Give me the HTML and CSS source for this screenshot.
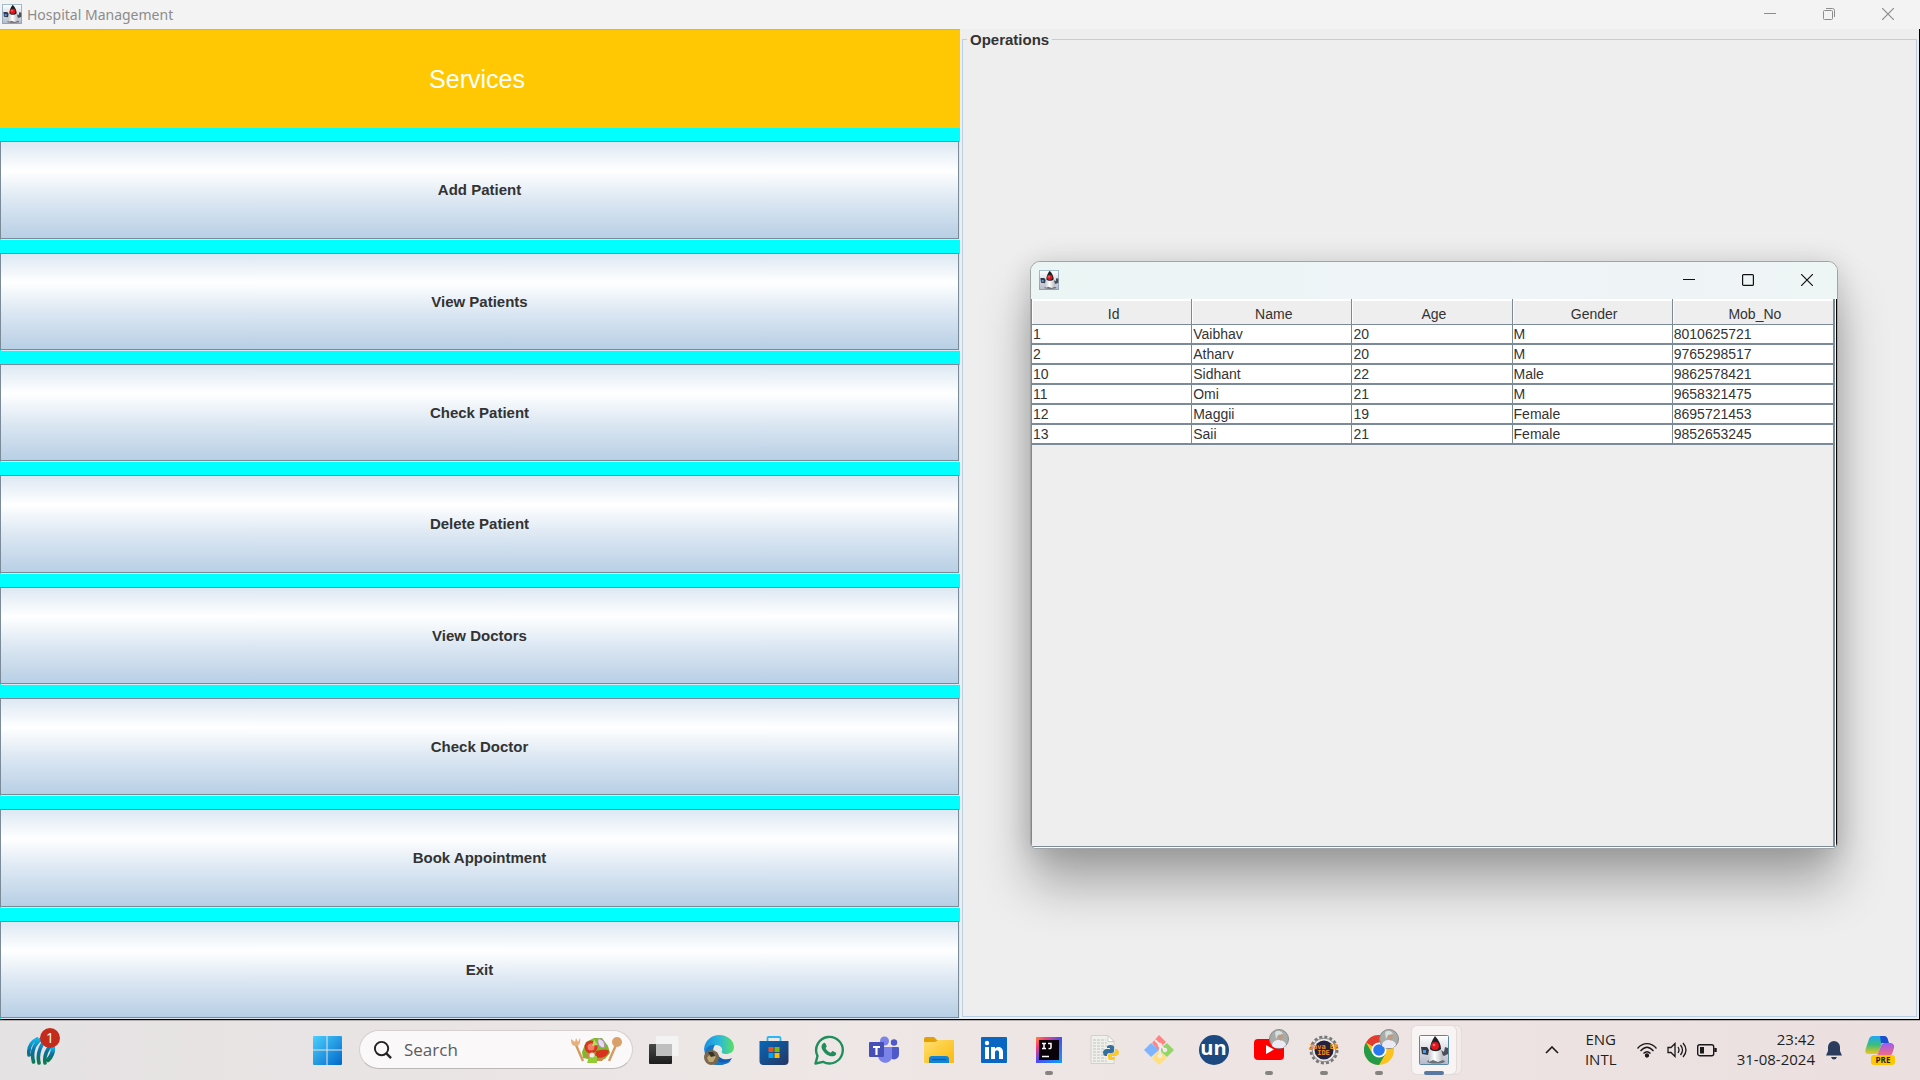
FILE: index.html
```html
<!DOCTYPE html>
<html lang="en">
<head>
<meta charset="utf-8">
<title>Hospital Management</title>
<link rel="stylesheet" href="styles.css">
</head>
<body>
<svg class="defs" aria-hidden="true">
  <defs>
    <linearGradient id="dukebg" x1="0" y1="0" x2="0" y2="1"><stop offset="0" stop-color="#fff"/><stop offset="1" stop-color="#b4bac8"/></linearGradient>
    <linearGradient id="dukebody" x1="0" y1="0" x2="1" y2="0"><stop offset="0" stop-color="#c9ccd0"/><stop offset=".4" stop-color="#fff"/><stop offset="1" stop-color="#b6babf"/></linearGradient>
    <linearGradient id="win" x1="0" y1="0" x2="1" y2="1"><stop offset="0" stop-color="#4cd0ff"/><stop offset="1" stop-color="#0067c8"/></linearGradient>
    <linearGradient id="teal" x1="0" y1="0" x2="0" y2="1"><stop offset="0" stop-color="#12b5ea"/><stop offset=".5" stop-color="#0a6f9f"/><stop offset="1" stop-color="#0b7a52"/></linearGradient>
    <linearGradient id="edge" x1="0" y1="0" x2="1" y2="0"><stop offset="0" stop-color="#1a8fe0"/><stop offset=".5" stop-color="#2bb8dc"/><stop offset="1" stop-color="#5be060"/></linearGradient>
    <linearGradient id="store" x1="0" y1="0" x2="1" y2="1"><stop offset="0" stop-color="#0668b8"/><stop offset="1" stop-color="#253562"/></linearGradient>
    <linearGradient id="folder" x1="0" y1="0" x2="1" y2="1"><stop offset="0" stop-color="#ffdf70"/><stop offset="1" stop-color="#fbb90a"/></linearGradient>
    <linearGradient id="dark" x1="0" y1="0" x2="0" y2="1"><stop offset="0" stop-color="#484848"/><stop offset="1" stop-color="#1c1c1c"/></linearGradient>
    <linearGradient id="ij" x1="0" y1="0" x2="1" y2="1"><stop offset="0" stop-color="#ff8a2c"/><stop offset=".2" stop-color="#fc3c7c"/><stop offset=".5" stop-color="#4a4ef0"/><stop offset="1" stop-color="#08a4f8"/></linearGradient>
    <linearGradient id="cop1" x1="0" y1="0" x2="0" y2="1"><stop offset="0" stop-color="#1fa8f4"/><stop offset=".5" stop-color="#3dbd7c"/><stop offset="1" stop-color="#f6c614"/></linearGradient>
    <linearGradient id="cop2" x1="0" y1="0" x2="0" y2="1"><stop offset="0" stop-color="#9a5cf4"/><stop offset="1" stop-color="#fb6b7c"/></linearGradient>
    <symbol id="duke" viewBox="0 0 30 30">
      <rect x=".5" y=".5" width="29" height="29" rx="1" fill="url(#dukebg)" stroke="#5b86ab"/>
      <ellipse cx="17" cy="26.500" rx="9" ry="2" fill="#6d7078"/>
      <path d="M2 12h6l2 3-1 5-6-1z" fill="#343b46"/><path d="M4 15h3v3H4z" fill="#4d9be0"/>
      <path d="M22 15l3 2 1-5 3 1v6l-4 2-3-2z" fill="#4a4e55"/>
      <path d="M12 12c-1 4-2 8-2 15l4-2 5 2 5-2c0-5-1-9-3-13z" fill="url(#dukebody)"/>
      <path d="M16 1c-3 4-5 9-5 13 3 3 8 3 11 0 0-4-2-9-6-13z" fill="#1e2024"/>
      <circle cx="16" cy="11" r="4" fill="#e3141c"/><circle cx="15" cy="10" r="1.300" fill="#ff6c6c"/>
    </symbol>
    <symbol id="close" viewBox="0 0 12 12"><path d="M0 0 12 12M12 0 0 12" fill="none" stroke="currentColor" stroke-width="1.200"/></symbol>
    <symbol id="min" viewBox="0 0 12 12"><path d="M0 5.500H12" stroke="currentColor"/></symbol>
    <symbol id="face" viewBox="0 0 20 20">
      <circle cx="10" cy="10" r="9.500" fill="#a7aca8" stroke="#898989"/>
      <path d="M3 17c0-5 4-6 7-6s7 2 7 5l-3 3H6z" fill="#e9eaf3"/>
      <path d="M9 4c3-1 5 1 5 4l-2 4-3-3z" fill="#c09a83"/><path d="M6 4c1-3 6-3 8 1l-5 1-2 4z" fill="#d6e0df"/>
    </symbol>
  </defs>
</svg>

<header class="titlebar">
  <svg class="app-icon" aria-hidden="true"><use href="#duke"/></svg>
  <span class="title">Hospital Management</span>
  <div class="win-controls">
    <button aria-label="Minimize"><svg><use href="#min"/></svg></button>
    <button aria-label="Restore"><svg viewBox="0 0 12 12" fill="none" stroke="currentColor"><rect x=".5" y="2.500" width="9" height="9" rx="1"/><path d="M3 .5h6.500a2 2 0 0 1 2 2V9"/></svg></button>
    <button aria-label="Close"><svg><use href="#close"/></svg></button>
  </div>
</header>

<main class="workspace">
  <nav class="services" aria-label="Services">
    <h1>Services</h1>
    <button>Add Patient</button>
    <button>View Patients</button>
    <button>Check Patient</button>
    <button>Delete Patient</button>
    <button>View Doctors</button>
    <button>Check Doctor</button>
    <button>Book Appointment</button>
    <button>Exit</button>
  </nav>
  <section class="panel">
    <fieldset class="operations"><legend>Operations</legend></fieldset>
    <div class="dialog" role="dialog" aria-label="Patients">
      <div class="dialog-bar">
        <svg class="app-icon" aria-hidden="true"><use href="#duke"/></svg>
        <div class="win-controls">
          <button aria-label="Minimize"><svg><use href="#min"/></svg></button>
          <button aria-label="Maximize"><svg viewBox="0 0 12 12"><rect x=".6" y=".6" width="10.800" height="10.800" rx="1" fill="none" stroke="currentColor" stroke-width="1.200"/></svg></button>
          <button aria-label="Close"><svg><use href="#close"/></svg></button>
        </div>
      </div>
      <div class="scroll-pane">
        <table>
          <thead><tr><th>Id</th><th>Name</th><th>Age</th><th>Gender</th><th>Mob_No</th></tr></thead>
          <tbody>
            <tr><td>1</td><td>Vaibhav</td><td>20</td><td>M</td><td>8010625721</td></tr>
            <tr><td>2</td><td>Atharv</td><td>20</td><td>M</td><td>9765298517</td></tr>
            <tr><td>10</td><td>Sidhant</td><td>22</td><td>Male</td><td>9862578421</td></tr>
            <tr><td>11</td><td>Omi</td><td>21</td><td>M</td><td>9658321475</td></tr>
            <tr><td>12</td><td>Maggii</td><td>19</td><td>Female</td><td>8695721453</td></tr>
            <tr><td>13</td><td>Saii</td><td>21</td><td>Female</td><td>9852653245</td></tr>
          </tbody>
        </table>
      </div>
    </div>
  </section>
</main>

<footer class="taskbar">
  <button class="widget" aria-label="Widgets">
    <svg viewBox="0 0 30 30" aria-hidden="true"><g fill="none" stroke="url(#teal)" stroke-width="3.600" stroke-linecap="round"><path d="M3 20C2 13 5 7 11 4M7.500 27C5 17 8 9 15 4M13 28c-2-8 0-15 6-23M19 28c-1-6 1-12 6-18"/><path d="M22 25c3-3 5-7 5-12" stroke-width="4.500"/></g></svg>
    <span class="badge">1</span>
  </button>
  <div class="apps">
    <button class="start" aria-label="Start"><svg viewBox="0 0 30 30"><path d="M1 2q0-1 1-1H14.500V14.500H1zM15.500 1H29q1 0 1 1V14.500H15.500zM1 15.500H14.500V30H2q-1 0-1-1zM15.500 15.500H30V29q0 1-1 1H15.500z" fill="url(#win)"/></svg></button>
    <label class="search">
      <svg class="glass" viewBox="0 0 20 20" aria-hidden="true"><circle cx="9" cy="9" r="7" fill="none" stroke="#222" stroke-width="2"/><path d="m14 14 5 5" stroke="#222" stroke-width="2.500"/></svg>
      <input type="text" placeholder="Search" aria-label="Search">
      <svg class="salad" viewBox="0 0 52 28" aria-hidden="true">
        <path d="m6 9 7 16M46 9 39 25" stroke="#d69a62" stroke-width="2.400"/><path d="M1 3c0 6 2 7 5 7s5-3 4-8L8 6 6 2 5 6z" fill="#e6b07a"/><circle cx="47" cy="6" r="5" fill="#d9a069"/>
        <path d="m12 16 4-10 8-4 8 0 6 8 2 7-5 6-6 1-6 3-5-4-5-1z" fill="#7db928"/>
        <path d="m14 19 9 6h9l6-7-8 1-8-2z" fill="#c88a4c"/>
        <circle cx="21" cy="11" r="6.500" fill="#dd3324"/><circle cx="21" cy="11" r="3.500" fill="#f08066"/><path d="M26 15c5-1 11-2 13 0-1 6-10 9-14 5z" fill="#d8321e"/>
        <path d="M28 3c4-1 8 4 6 9-4 0-7-4-6-9z" fill="#e8daf0" stroke="#b28bc4"/><path d="m17 27 3-9 7 2 0 7z" fill="#93cb35"/><path d="M24 3l4 6-6 1z" fill="#b5dc5c"/><circle cx="22" cy="19" r="2.500" fill="#f1e9ef"/>
      </svg>
    </label>
    <button aria-label="Task view"><svg viewBox="0 0 30 30"><rect x="0" y="9" width="23" height="20" rx="1" fill="url(#dark)"/><rect x="7" y="1" width="22.500" height="20" rx="1" fill="#f3f3f3"/><path d="M7 9H23V21H7z" fill="#bfbfbf"/></svg></button>
    <button aria-label="Edge"><svg viewBox="0 0 30 30">
      <path d="M1 17C0 28 12 33 23 28c2-1 4-3 5-5-6 3-14 1-15-6z" fill="#0f5db4"/>
      <path d="M0 14C1 5 8 0 15 0c9 0 15 6 15 12 0 5-4 7-8 7-3 0-5-1-4-3 1-3-2-6-6-6-6 0-10 4-11 9z" fill="url(#edge)"/>
      <path d="M1 18c0-5 5-9 10-8-3 4-3 12 3 16 4 3 10 1 13 0-5 5-24 8-26-8z" fill="#1577c8"/>
      <circle cx="7.500" cy="22.500" r="7.500" fill="#7b684a"/><path d="M3 23c2-4 6-5 9-1l-3 5H5z" fill="#c1a774"/><path d="M4 17h5l2 4-4 1z" fill="#33342a"/></svg></button>
    <button aria-label="Microsoft Store"><svg viewBox="0 0 30 30"><path d="M8.500 7V3q0-1 1-1H20q1.500 0 1.500 1V7" fill="none" stroke="#2bb7ef" stroke-width="1.800"/><path d="M.5 6h29v20q0 4-4 4h-21q-4 0-4-4z" fill="url(#store)"/><path d="M9.500 12h5v5h-5z" fill="#f25022"/><path d="M15.500 12h5v5h-5z" fill="#7fba00"/><path d="M9.500 18h5v5h-5z" fill="#00a4ef"/><path d="M15.500 18h5v5h-5z" fill="#ffb900"/></svg></button>
    <button aria-label="WhatsApp"><svg viewBox="0 0 30 30"><path d="M1.500 28.500 3.500 21A13.300 13.300 0 1 1 9 26.800z" fill="none" stroke="#1e8e5a" stroke-width="2.400" stroke-linejoin="round"/><path d="M9 8.500c1-1.200 2-1 2.600.2l1 2.300c.4 1-1 1.700-1 2.300 1 2.200 3 3.700 5 4.500.8-.2 1.400-1.700 2-1.800l3 1.400c1 .5.600 1.600 0 2.500-1.200 1.700-4 1.800-6.500.8-3-1.200-5.500-3.500-7-6.500-1-2-.8-4.200.9-5.700z" fill="#1e8e5a"/></svg></button>
    <button aria-label="Teams"><svg viewBox="0 0 30 30"><circle cx="15.500" cy="6" r="4.500" fill="#7b83eb"/><circle cx="25" cy="7.500" r="3.200" fill="#5059c9"/><path d="M20 12h9q1 0 1 1v6c0 5-5 7-9 4z" fill="#5059c9"/><path d="M10 12h13v9c0 9-13 9-14 0z" fill="#7b83eb"/><rect x="0" y="7" width="15" height="15" rx="1" fill="#464eb8"/><path d="M4 11h7v2H8.600v7H6.400v-7H4z" fill="#fff"/></svg></button>
    <button aria-label="File Explorer"><svg viewBox="0 0 30 30"><path d="M0 4q0-2 2-2h8l3 3h15q2 0 2 2v4H0z" fill="#e2a008"/><path d="M0 7h11l3-2h16v22q0 1-1 1H1q-1 0-1-1z" fill="url(#folder)"/><path d="M5 28v-4q0-3 3-3h14q3 0 3 3v4z" fill="#1383d8"/><path d="M8 24.500h14" stroke="#0b5599" stroke-width="1.200"/></svg></button>
    <button aria-label="LinkedIn"><svg viewBox="0 0 30 30"><rect x="2" y="2" width="26" height="26" rx="1" fill="#0a66c2"/><circle cx="8" cy="8" r="2.200" fill="#fff"/><path d="M6 12h4v12H6zM12 12h4v1.700c2-3 8-2.500 8 3.300v7h-4v-6.500c0-3-4-3-4 0V24h-4z" fill="#fff"/></svg></button>
    <button class="running" aria-label="IntelliJ IDEA"><svg viewBox="0 0 30 30"><rect x="2" y="2" width="26" height="26" fill="url(#ij)"/><path d="M5 5h20v20H5z" fill="#0a0208"/><path d="M8 8.500h4M10 8.500v5M8 13.500h4M14 8.500h3v4q0 1.500-2.500 1" fill="none" stroke="#fff" stroke-width="1.500"/><path d="M8 21.500h7" stroke="#fff" stroke-width="1.500"/></svg></button>
    <button aria-label="Python file"><svg viewBox="0 0 30 30"><path d="M2 .5h17l6 6v22H2z" fill="#efefec" stroke="#d0d0cc"/><path d="M19 .5v6h6z" fill="#fff" stroke="#ccc"/><path d="M4 5h13M4 8h14M4 11h14M4 14h11M4 17h10M4 20h11M4 23h13M4 26h14" stroke="#c2c4c2" stroke-dasharray="3 1"/><path d="M18 12q0-2 3.500-2t3.500 2v4q0 2-2 2h-3q-2 0-2 3h-2q-2-1-2-3.500t3-3.500h4v-1h-3z" fill="#33709f"/><path d="M26 14h2q2 1 2 3.500T27 21h-4v1h3v1q0 2-3.500 2T19 23v-3q0-2 2-2h3q2 0 2-2z" fill="#fbc92e"/></svg></button>
    <button aria-label="Git"><svg viewBox="0 0 30 30"><path d="m15 0 7 7-8 8-6-7z" fill="#ff8585"/><path d="m23 8 7 7-7 7-8-7z" fill="#94d666"/><path d="m15 15 8 8-8 7-7-7z" fill="#ffe080"/><path d="m7 8 8 7-8 7-7-7z" fill="#80b4ff"/><path d="m11 5 10 10M16 10v12" stroke="#f0ebea" stroke-width="2"/><circle cx="16" cy="10" r="2.300" fill="#f0ebea"/><circle cx="21" cy="15" r="2.300" fill="#f0ebea"/><circle cx="16" cy="21" r="2.300" fill="#f0ebea"/></svg></button>
    <button aria-label="Unstop"><span class="unstop">un</span></button>
    <button class="running" aria-label="YouTube"><svg viewBox="0 0 30 30"><rect x="0" y="4" width="30" height="21" rx="4" fill="#f00"/><path d="m12 10 8 4.500-8 4.500z" fill="#fff"/></svg><svg class="face"><use href="#face"/></svg></button>
    <button class="running" aria-label="Eclipse Java EE IDE"><svg viewBox="0 0 30 30"><circle cx="15" cy="15" r="13" fill="none" stroke="#777" stroke-width="3" stroke-dasharray="3 2.100"/><circle cx="15" cy="15" r="11.800" fill="#eceae9" stroke="#888"/><circle cx="15" cy="15" r="9.500" fill="#26203e"/></svg><span class="eclipse">Java EE<br>IDE</span></button>
    <button class="running" aria-label="Chrome"><svg viewBox="0 0 30 30"><circle cx="15" cy="15" r="15" fill="#fcc31e"/><path d="M15 15 2 7.500A15 15 0 0 1 28 7.500H15z" fill="#e33b2e"/><path d="M2 7.500A15 15 0 0 0 15 30l6.500-11.200L15 15 8.500 18.700z" fill="#249a4a"/><circle cx="15" cy="15" r="7.500" fill="#fff"/><circle cx="15" cy="15" r="5.800" fill="#2878ee"/></svg><svg class="face"><use href="#face"/></svg></button>
    <button class="running active" aria-label="Hospital Management"><svg><use href="#duke"/></svg></button>
  </div>
  <div class="tray">
    <button aria-label="Show hidden icons"><svg class="chevron" viewBox="0 0 14 8"><path d="m1 7 6-6 6 6" fill="none" stroke="#1a1a1a" stroke-width="1.600"/></svg></button>
    <button class="lang">ENG<br>INTL</button>
    <button class="status" aria-label="Network, volume and battery">
      <svg viewBox="0 0 20 16" fill="none" stroke="#1a1a1a" stroke-width="1.300"><path d="M.5 6.500C6 0 14 0 19.500 6.500M3.500 9C8 4 12 4 16.500 9M6.500 11.500c2.500-2.500 4.500-2.500 7 0"/><circle cx="10" cy="13.500" r="1.500" fill="#1a1a1a"/></svg>
      <svg viewBox="0 0 20 16" fill="none" stroke="#1a1a1a" stroke-width="1.300"><path d="M1 5.500h3L8 1.500v13L4 10.500H1zM11 5q2 3 0 6M13.500 3q4 5 0 10M16 1q6 7 0 14"/></svg>
      <svg viewBox="0 0 20 16" fill="none" stroke="#1a1a1a" stroke-width="1.400"><rect x=".7" y="2.700" width="16" height="11" rx="2"/><path d="M3 5h4v6.500H3z" fill="#1a1a1a" stroke="none"/><path d="M18.500 6v4" stroke-width="2.500"/></svg>
    </button>
    <button class="clock">23:42<br>31-08-2024</button>
    <button aria-label="Notifications"><svg class="bell" viewBox="0 0 16 20"><path d="M0 15.500 2 11V7a6 6 0 0 1 12 0v4l2 4.500zM5 17h6q-1 2.500-3 2.500T5 17z" fill="#2c3c5c"/></svg></button>
    <button class="copilot" aria-label="Copilot"><svg viewBox="0 0 30 30"><path d="M8 1h11q3 0 4 4l-2 3h-4l-4 11H3Q-1 19 1 13L4 4q1-3 4-3z" fill="url(#cop1)"/><path d="M15 1h4q3 0 4 4l1 3h-8z" fill="#1a4fd0"/><path d="M19 8h7q4 1 3 5l-2 6q-1 2-4 2H12l4-10q1-3 3-3z" fill="url(#cop2)"/></svg><span>PRE</span></button>
  </div>
</footer>
</body>
</html>
```
FILE: styles.css
```css
* { box-sizing: border-box; }

body {
  margin: 0;
  min-height: 100vh;
  display: flex;
  flex-direction: column;
  background: #eee;
  font-family: "Liberation Sans", Arial, sans-serif;
  font-size: 15px;
  color: #333;
}

button {
  margin: 0;
  padding: 0;
  border: 0;
  background: none;
  font: inherit;
  color: inherit;
}

.defs { position: absolute; width: 0; height: 0; }
.app-icon { width: 20px; height: 20px; flex: none; }

/* Main window title bar */
.titlebar {
  height: 29px;
  padding: 0 3px 1px 2px;
  display: flex;
  align-items: center;
  gap: 5px;
  background: #f3f3f3;
  color: #8c8c8c;
}

.title {
  font-family: "Noto Sans", "Open Sans", sans-serif;
  font-size: 14px;
}

.win-controls { margin-left: auto; display: flex; align-self: stretch; }
.win-controls button {
  width: 59px;
  display: flex;
  align-items: center;
  justify-content: center;
}
.win-controls svg { width: 12px; height: 12px; }

/* Two equal halves */
.workspace {
  flex: 1;
  display: grid;
  grid-template-columns: 1fr 1fr;
  border-bottom: 1px solid #000;
}

.services {
  display: grid;
  grid-auto-rows: 1fr;
  gap: 13px;
  padding-top: 1px;
  background: #0ff;
}

.services h1 {
  margin: 0;
  padding-right: 6px;
  display: flex;
  align-items: center;
  justify-content: center;
  background: #ffc803;
  color: #fff;
  font-size: 25px;
  font-weight: 400;
}

.services button {
  border: 1px solid #7a8a99;
  margin: 0 1px 1px 0;
  box-shadow: 1px 1px 0 #d9e8f3;
  background: linear-gradient(#dde8f3 0%, #fff 30%, #dde8f3 60%, #b8cfe5 100%);
  font-weight: 700;
}

.panel {
  position: relative;
  display: flex;
  padding: 2px 2px;
  border-right: 1px solid #000;
}

.operations {
  flex: 1;
  margin: 0;
  padding: 0 8px;
  border: 1px solid #b8cfe5;
}
.operations legend {
  padding: 0 3px;
  margin-left: -4px;
  font-weight: 700;
  line-height: 17px;
}

/* Floating patient list window */
.dialog {
  position: absolute;
  left: 70px;
  top: 232px;
  width: 808px;
  height: 588px;
  display: flex;
  flex-direction: column;
  border: 1px solid #a0a4a6;
  border-radius: 10px 10px 6px 6px;
  overflow: hidden;
  background: #eee;
  box-shadow: 0 36px 50px rgba(0, 0, 0, .3), 0 2px 28px rgba(0, 0, 0, .14);
}

.dialog-bar {
  height: 37px;
  flex: none;
  padding: 0 1px 2px 8px;
  display: flex;
  align-items: center;
  background: linear-gradient(90deg, #ebf5f4, #eff4f8 50%, #eef5f5);
  color: #111;
}

.scroll-pane {
  flex: 1;
  border: solid #7a8a99;
  border-width: 0 2px 1px 1px;
  box-shadow: 0 1px 0 #fff, 1px 0 0 #fff, 2px 0 0 #000;
  margin: 0 2px 1px 0;
}

table {
  width: 100%;
  table-layout: fixed;
  border-collapse: separate;
  border-spacing: 0;
  font-size: 14px;
}

th {
  height: 26px;
  padding: 4px 0 0 4px;
  font-weight: 400;
  background: #eee;
  border-right: 1px solid #7a8a99;
  border-bottom: 1px solid #7a8a99;
  box-shadow: inset 1px 2px 0 #fff;
}

td {
  height: 20px;
  padding: 1px 0 0 1px;
  background: #fff;
  border-right: 1px solid #7a8a99;
  border-bottom: 2px solid #7a8a99;
  line-height: 17px;
}

th:last-child, td:last-child { border-right: 0; }

/* Taskbar */
.taskbar {
  height: 60px;
  display: flex;
  align-items: center;
  padding: 0 25px 2px 26px;
  border-top: 1px solid #b5b0af;
  background: linear-gradient(90deg, #e5e2e3, #eee7e6 45%, #ebe0df);
  font-family: "Open Sans", "Noto Sans", sans-serif;
  color: #1f1f1f;
}

.taskbar svg { display: block; }

.widget { position: relative; width: 30px; height: 30px; }
.widget svg { width: 30px; height: 30px; }
.badge {
  position: absolute;
  left: 14px;
  top: -7px;
  width: 20px;
  height: 20px;
  border-radius: 50%;
  background: #c42b1c;
  color: #fff;
  font-size: 14px;
  line-height: 20px;
}

.apps { margin-left: 243px; display: flex; align-items: center; }
.apps button {
  position: relative;
  width: 55px;
  height: 50px;
  display: flex;
  align-items: center;
  justify-content: center;
}
.apps button svg { width: 30px; height: 30px; }
.apps .face {
  position: absolute;
  left: 28px;
  top: 4px;
  width: 20px;
  height: 20px;
}

.running::after {
  content: "";
  position: absolute;
  left: 50%;
  bottom: 0;
  width: 8px;
  height: 4px;
  margin-left: -4px;
  border-radius: 2px;
  background: #858382;
}
.apps .active {
  width: 44px;
  height: 48px;
  margin-left: 6px;
  border-radius: 5px;
  background: #f8f4f3;
  box-shadow: 0 0 0 1px #e2dcdb, 5px 0 0 #f1eceb, 5px 0 0 1px #e2dcdb;
}
.active::after { width: 20px; margin-left: -10px; background: #5878a2; bottom: -1px; }

.search {
  width: 274px;
  height: 39px;
  margin: 0 3px 0 5px;
  padding: 0 10px 0 13px;
  display: flex;
  align-items: center;
  gap: 12px;
  border: 1px solid #d5cfce;
  border-bottom-color: #bcb8b7;
  border-radius: 20px;
  background: #faf8f8;
}
.search input {
  flex: 1;
  min-width: 0;
  padding: 0;
  border: 0;
  background: none;
  font: inherit;
  font-size: 17px;
}
.search input::placeholder { color: #5c5c5c; opacity: 1; }
.glass { width: 19px; height: 19px; }
.salad { width: 52px; height: 28px; }

.unstop {
  width: 30px;
  height: 30px;
  border-radius: 50%;
  background: #1c4980;
  color: #fff;
  font-size: 20px;
  font-weight: 700;
  line-height: 26px;
}

.eclipse {
  position: absolute;
  left: 0;
  right: 0;
  top: 19px;
  color: #f58a1c;
  font: 700 7px/6px "DejaVu Sans Mono", monospace;
}

.tray { margin-left: auto; display: flex; align-items: center; }
.chevron { width: 14px; height: 8px; }
.lang { margin-left: 24px; padding-bottom: 2px; width: 36px; line-height: 20px; font-size: 15px; }
.status { margin-left: 18px; display: flex; gap: 10px; }
.status svg { width: 20px; height: 16px; }
.clock { margin-left: 20px; padding-bottom: 2px; text-align: right; font-size: 15px; line-height: 20px; }
.bell { width: 16px; height: 20px; margin-left: 11px; }
.copilot { position: relative; margin-left: 23px; }
.copilot svg { width: 30px; height: 30px; }
.copilot span {
  position: absolute;
  left: 6px;
  bottom: 0;
  width: 24px;
  border-radius: 3px;
  background: #fdc800;
  font-size: 8px;
  font-weight: 700;
  line-height: 10px;
}
```
